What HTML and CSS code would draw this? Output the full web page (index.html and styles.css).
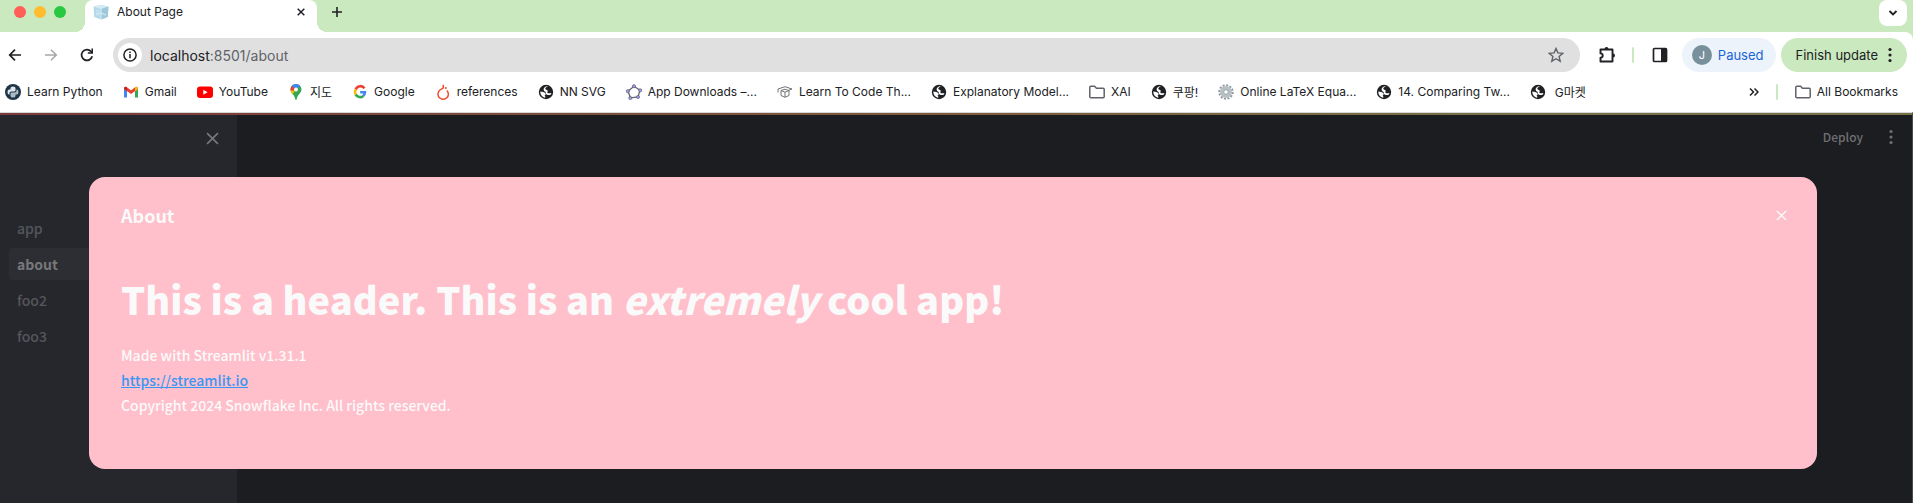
FILE: index.html
```html
<!DOCTYPE html>
<html lang="en">
<head>
<meta charset="utf-8">
<title>About Page</title>
<link rel="stylesheet" href="styles.css">
</head>
<body>
<svg class="defs" width="0" height="0" aria-hidden="true">
  <symbol id="globe" viewBox="0 0 16 16"><circle cx="8" cy="8" r="7.200" fill="#202124"/><path d="M9.500 2.700C7.300 3 6.800 4.500 7.800 5.500c.8.700 1.700.3 1.900 1.300.1 1-.6 1.200-.2 2 .5.700 2 .7 3.900.1l-.5 1.700c-1.500.8-3.900.7-4.800-.6-.6-1-.1-1.800-.5-2.100C6.500 7.300 5.600 6.700 5.600 5.500c0-1.900 1.600-3.200 3.900-3.300z" fill="#fff"/><path d="M2.300 7.500c2.200.3 4 .5 4.900 1.500.9 1.200.2 2.300-.7 2.700 1 .5 1 1.400.7 2-2.500-.3-5-2.500-4.900-6.200z" fill="#fff"/></symbol>
  <symbol id="folder" viewBox="0 0 16 16"><path d="M.8 3.300q0-1 1-1h3.800l1.800 1.900h6.800q1 0 1 1v7.500q0 1-1 1H1.800q-1 0-1-1z" fill="none" stroke="#5f6368" stroke-width="1.500"/></symbol>
  <symbol id="close" viewBox="0 0 12 12"><path d="M1 1l10 10M11 1L1 11" fill="none" stroke="currentColor" stroke-width="1.500"/></symbol>
  <symbol id="close-bold" viewBox="0 0 12 12"><path d="M1 1l10 10M11 1L1 11" fill="none" stroke="currentColor" stroke-width="2.200"/></symbol>
  <symbol id="dots" viewBox="0 0 4 16"><circle cx="2" cy="2.500" r="1.600" fill="currentColor"/><circle cx="2" cy="8" r="1.600" fill="currentColor"/><circle cx="2" cy="13.500" r="1.600" fill="currentColor"/></symbol>
</svg>

<header class="browser">
  <div class="tabstrip">
    <div class="lights"><i class="light red"></i><i class="light amber"></i><i class="light green"></i></div>
    <div class="tab">
      <svg width="16" height="16" viewBox="0 0 16 16" aria-hidden="true"><path d="M.5 2.500L8 1l7.500 1.500-.8 10.500L8 15.500 1.300 13z" fill="#b4d9e8"/><path d="M.5 2.500L8 1l7.500 1.500L8 5z" fill="#d3ebf4"/><path d="M8 5v10.500L14.700 13l.8-10.500z" fill="#9fc9db"/><path d="M3 5.500l3 1v5l-2.500-1z" fill="#c4e2ee"/><path d="M8 5v10M3 11l5-2 5 2" stroke="#d8eef6" fill="none"/></svg>
      <span class="tab-title">About Page</span>
      <button class="plain" aria-label="Close tab"><svg width="8" height="8"><use href="#close-bold"/></svg></button>
    </div>
    <button class="plain new-tab" aria-label="New tab"><svg width="12" height="12" viewBox="0 0 12 12"><path d="M6 1v10M1 6h10" stroke="#202124" stroke-width="1.600"/></svg></button>
    <button class="plain tab-search" aria-label="Search tabs"><svg width="10" height="8" viewBox="0 0 10 8"><path d="M1.500 2L5 5.500 8.500 2" fill="none" stroke="#202124" stroke-width="1.800"/></svg></button>
  </div>

  <div class="toolbar-wrap">
  <div class="toolbar">
    <div class="nav-buttons">
      <button class="plain" aria-label="Back"><svg width="14" height="14" viewBox="0 0 14 14"><path d="M13 7H2M7 1.700L1.700 7 7 12.300" fill="none" stroke="#202124" stroke-width="1.700"/></svg></button>
      <button class="plain" aria-label="Forward"><svg width="14" height="14" viewBox="0 0 14 14"><path d="M1 7h11M7 1.700L12.300 7 7 12.300" fill="none" stroke="#a5a6a8" stroke-width="1.500"/></svg></button>
      <button class="plain" aria-label="Reload"><svg width="14" height="14" viewBox="0 0 14 14"><path d="M12.200 8.300A5.400 5.400 0 1 1 11 3.400l1.300 1.300" fill="none" stroke="#202124" stroke-width="1.700"/><path d="M13 .5v5.300H7.800V4.300h3.700V.5z" fill="#202124"/></svg></button>
    </div>
    <div class="omnibox">
      <button class="plain site-info" aria-label="Site information"><svg width="14" height="14" viewBox="0 0 14 14"><circle cx="7" cy="7" r="6.100" fill="none" stroke="#202124" stroke-width="1.500"/><path d="M7 6v4.300M7 3.500v1.500" stroke="#202124" stroke-width="1.500"/></svg></button>
      <a class="url" href="#">localhost<span class="path">:8501/about</span></a>
      <button class="plain" aria-label="Bookmark this tab"><svg width="16" height="16" viewBox="0 0 16 16"><path d="M8 1.500l1.900 4.400 4.900.4-3.700 3.200 1.100 4.700L8 11.700l-4.200 2.500 1.100-4.700L1.200 6.300l4.900-.4z" fill="none" stroke="#5f6368" stroke-width="1.400"/></svg></button>
    </div>
    <button class="plain extensions" aria-label="Extensions"><svg width="18" height="18" viewBox="0 0 18 18"><path d="M2.500 3.500h12v12h-12v-3.700a2.200 2.200 0 0 0 0-4.400z" fill="none" stroke="#202124" stroke-width="1.900" stroke-linejoin="round"/><path d="M6.500 3a2 2 0 0 1 4 0zM15 7.500a2 2 0 0 1 0 4z" fill="#202124"/></svg></button>
    <i class="divider"></i>
    <button class="plain side-panel" aria-label="Side panel"><svg width="16" height="16" viewBox="0 0 16 16"><rect x="1.500" y="1.500" width="13" height="13" rx="1" fill="none" stroke="#202124" stroke-width="1.700"/><path d="M9 1.500h5.500v13H9z" fill="#202124"/></svg></button>
    <button class="pill profile"><span class="avatar">J</span>Paused</button>
    <button class="pill update">Finish update<svg width="4" height="16"><use href="#dots"/></svg></button>
  </div>

  <nav class="bookmarks" aria-label="Bookmarks">
    <a href="#"><svg viewBox="0 0 16 16"><circle cx="8" cy="8" r="8" fill="#1d3549"/><path d="M5.500 5.500V4q0-1.500 2.500-1.500T10.500 4v2.200q0 1.300-1.300 1.300H6.300Q4.500 7.500 4.500 9.300v1.200H4Q2.500 10.500 2.500 8T4 5.500h4" fill="#dfe5e8"/><path d="M10.500 10.500V12q0 1.500-2.500 1.500T5.500 12V9.800q0-1.300 1.300-1.300h2.900q1.800 0 1.800-1.800V5.500h.5q1.500 0 1.500 2.500T12 10.500H8" fill="#aebbc3"/></svg>Learn Python</a>
    <a href="#"><svg viewBox="0 0 16 16"><path d="M1 5v8.500h3V7z" fill="#4285f4"/><path d="M12 7v6.500h3V5z" fill="#34a853"/><path d="M1 5q0-2.800 2.500-2L8 6.300 12.500 3Q15 2.200 15 5L8 10z" fill="#ea4335"/><path d="M12 3.400L12.500 3Q15 2.200 15 5l-3 2.200z" fill="#fbbc04"/><path d="M1 5q0-2.800 2.500-2l.5.400v3.800z" fill="#c5221f"/></svg>Gmail</a>
    <a href="#"><svg viewBox="0 0 16 16"><rect y="2.500" width="16" height="11.500" rx="3" fill="#f00"/><path d="M6.300 5.700v5l4.300-2.500z" fill="#fff"/></svg>YouTube</a>
    <a href="#"><svg viewBox="0 0 16 16"><path d="M8 0a5.500 5.500 0 0 0-5.500 5.500C2.500 9 6.500 10.500 7.200 15q.8 2 1.600 0C9.500 10.500 13.500 9 13.500 5.500A5.500 5.500 0 0 0 8 0z" fill="#34a853"/><path d="M2.600 6.500Q3 8.500 4.500 10l6-7z" fill="#fbbc04"/><path d="M8 0a5.500 5.500 0 0 0-4.300 2L8 5.500 12.200 2A5.500 5.500 0 0 0 8 0z" fill="#4285f4"/><path d="M3.700 2a5.500 5.500 0 0 0-1.100 4.500L6 6.500 7 4.500z" fill="#ea4335"/><circle cx="8" cy="5.500" r="1.900" fill="#fff"/></svg>지도</a>
    <a href="#"><svg viewBox="0 0 16 16"><g fill="none" stroke-width="2.600"><path d="M12.500 4.300A5 5 0 0 0 3.700 5.500" stroke="#ea4335"/><path d="M3.700 5.500a5 5 0 0 0 0 5" stroke="#fbbc04"/><path d="M3.700 10.500a5 5 0 0 0 7.600 1.400" stroke="#34a853"/><path d="M11.300 11.900Q12.800 10.500 12.900 8.200H8.200" stroke="#4285f4"/></g></svg>Google</a>
    <a href="#"><svg viewBox="0 0 16 16"><path d="M8.300.8v3L4.400 6.500a5.200 5.200 0 1 0 7.500 0" fill="none" stroke="#ee4c2c" stroke-width="1.500"/><circle cx="10.800" cy="4" r="1" fill="#ee4c2c"/></svg>references</a>
    <a href="#"><svg><use href="#globe"/></svg>NN SVG</a>
    <a href="#"><svg viewBox="0 0 16 16"><path d="M8 2.300l6 4-2 6.700-7.500.8L2 7.200z" fill="none" stroke="#666" stroke-width="1.300"/><g fill="#9999ff" stroke="#555" stroke-width=".6"><circle cx="8" cy="2.200" r="1.600"/><circle cx="14.200" cy="6.300" r="1.600"/><circle cx="12" cy="13" r="1.600"/><circle cx="4.300" cy="14" r="1.600"/><circle cx="1.900" cy="7.200" r="1.600"/></g></svg>App Downloads –...</a>
    <a href="#"><svg viewBox="0 0 16 16"><path d="M1 8.500V5l7-2.300L15 5l-3 1.200M4 6.500L8 5.200l4 1.300v5L8 13.300l-4-1.800zM4 6.500L8 8.200l4-1.700M8 8.200v5" fill="none" stroke="#707376"/></svg>Learn To Code Th...</a>
    <a href="#"><svg><use href="#globe"/></svg>Explanatory Model...</a>
    <a href="#"><svg><use href="#folder"/></svg>XAI</a>
    <a href="#"><svg><use href="#globe"/></svg>쿠팡!</a>
    <a href="#"><svg viewBox="0 0 16 16"><circle cx="8" cy="8" r="6.700" fill="none" stroke="#8c989e" stroke-width="2" stroke-dasharray="2 1.500"/><circle cx="8" cy="8" r="4.300" fill="none" stroke="#b7c1c5" stroke-width="3.600"/><circle cx="8" cy="8" r="2.300" fill="#fff" stroke="#7d898f" stroke-width=".8"/></svg>Online LaTeX Equa...</a>
    <a href="#"><svg><use href="#globe"/></svg>14. Comparing Tw...</a>
    <a href="#" class="spaced"><svg><use href="#globe"/></svg>G마켓</a>
    <div class="bookmarks-end">
      <button class="plain" aria-label="More bookmarks"><svg width="10" height="10" viewBox="0 0 10 10"><path d="M1 1.500L4.500 5 1 8.500M5.500 1.500L9 5 5.500 8.500" fill="none" stroke="#202124" stroke-width="1.500"/></svg></button>
      <i class="divider"></i>
      <a href="#"><svg><use href="#folder"/></svg>All Bookmarks</a>
    </div>
  </nav>
  </div>
</header>

<div class="app">
  <aside class="sidebar">
    <button class="plain sidebar-close" aria-label="Close sidebar"><svg width="13" height="13"><use href="#close"/></svg></button>
    <nav class="pages" aria-label="Pages">
      <a href="#">app</a>
      <a href="#" class="current" aria-current="page">about</a>
      <a href="#">foo2</a>
      <a href="#">foo3</a>
    </nav>
  </aside>
  <main class="main">
    <div class="app-bar">
      <button class="plain deploy">Deploy</button>
      <button class="plain" aria-label="Main menu"><svg width="4" height="16"><use href="#dots"/></svg></button>
    </div>
  </main>

  <div class="overlay">
    <section class="modal" role="dialog" aria-labelledby="modal-title">
      <div class="modal-head">
        <h2 id="modal-title">About</h2>
        <button class="plain" aria-label="Close"><svg width="11" height="11"><use href="#close"/></svg></button>
      </div>
      <h1>This is a header. This is an <em>extremely</em> cool app!</h1>
      <p>Made with Streamlit v1.31.1<br><a href="https://streamlit.io">https://streamlit.io</a><br>Copyright 2024 Snowflake Inc. All rights reserved.</p>
    </section>
  </div>
</div>
</body>
</html>
```
FILE: styles.css
```css
* { box-sizing: border-box; }

body {
  margin: 0;
  min-height: 100vh;
  display: flex;
  flex-direction: column;
  font-family: Inter, "Noto Sans CJK KR", sans-serif;
  font-size: 12px;
  color: #202124;
}

.defs { position: absolute; }
svg { display: block; flex: none; }
a { color: inherit; text-decoration: none; }

.plain {
  display: flex;
  align-items: center;
  justify-content: center;
  padding: 0;
  border: 0;
  background: none;
  color: inherit;
  font: inherit;
}

/* Browser frame */
.browser { background: #cbe9bf; }

.tabstrip {
  display: flex;
  height: 32px;
  padding: 0 6px 0 14px;
}

.lights { display: flex; gap: 8px; width: 71px; padding-top: 6px; }
.light { width: 12px; height: 12px; border-radius: 50%; }
.red { background: #ff5f57; }
.amber { background: #febc2e; }
.green { background: #28c840; }

.tab {
  position: relative;
  display: flex;
  align-items: center;
  width: 232px;
  padding: 0 12px 9px 8px;
  background: #fff;
  border-radius: 8px 8px 0 0;
}
.tab::before, .tab::after {
  content: "";
  position: absolute;
  bottom: 0;
  width: 10px;
  height: 10px;
}
.tab::before { right: 100%; background: radial-gradient(circle at 0 0, transparent 10px, #fff 10px); }
.tab::after { left: 100%; background: radial-gradient(circle at 100% 0, transparent 10px, #fff 10px); }
.tab-title { flex: 1; padding-left: 8px; }

.new-tab { width: 40px; height: 24px; }
.tab-search {
  width: 28px;
  height: 26px;
  margin-left: auto;
  background: #fff;
  border-radius: 8px;
}

.toolbar-wrap { background: #fff; border-top-right-radius: 8px; }

.toolbar {
  display: flex;
  align-items: center;
  padding: 6px 6px 0 8px;
}
.nav-buttons { display: flex; gap: 22px; width: 105px; }

.omnibox {
  flex: 1;
  display: flex;
  align-items: center;
  height: 34px;
  padding: 0 16px 0 5px;
  background: #e0e0e0;
  border-radius: 17px;
}
.site-info { width: 24px; height: 24px; background: #fff; border-radius: 50%; }
.url { flex: 1; padding-left: 8px; font-size: 14px; }
.path { color: #5f6368; }

.extensions { margin-left: 18px; }
.divider { width: 2px; height: 16px; background: #cbe9bf; border-radius: 1px; }
.extensions + .divider { margin: 0 18px 0 16px; }
.side-panel { margin-right: 14px; }

.pill {
  display: flex;
  align-items: center;
  height: 34px;
  border: 0;
  border-radius: 17px;
  color: inherit;
  font: inherit;
  font-size: 13px;
  white-space: nowrap;
}
.profile {
  gap: 6px;
  margin-right: 5px;
  padding: 0 12px 0 10px;
  background: #edf3fb;
  color: #1a63d8;
}
.avatar {
  width: 20px;
  height: 20px;
  border-radius: 50%;
  background: #78909c;
  color: #fff;
  font-size: 11px;
  line-height: 20px;
}
.update { gap: 10px; padding: 0 15px; background: #cbe9bf; }

.bookmarks {
  display: flex;
  align-items: center;
  gap: 20px;
  height: 40px;
  padding: 0 15px 1px 5px;
  white-space: nowrap;
}
.bookmarks a { display: flex; align-items: center; gap: 6px; }
.bookmarks a svg { width: 16px; height: 16px; }
.bookmarks a.spaced { gap: 9px; }
.bookmarks-end { display: flex; align-items: center; gap: 17px; margin-left: auto; }

/* Streamlit app */
.app {
  position: relative;
  flex: 1;
  display: flex;
  border-top: 1px solid #d5d8d5;
  border-right: 1px solid #4b4b4d;
  background: #1c1d21;
  font-family: "Noto Sans CJK KR", sans-serif;
  font-size: 14px;
}
.app::before {
  content: "";
  position: absolute;
  inset: 0 0 auto 0;
  height: 2px;
  background: linear-gradient(90deg, #7c3a3c, #7d5a3c 50%, #767248 80%);
}

.sidebar { width: 237px; background: #26272c; color: #55565a; }
.sidebar-close { margin: 19px 18px 0 auto; color: #77787b; }
.pages { display: flex; flex-direction: column; gap: 4px; padding: 67px 9px 0; }
.pages a { padding: 0 8px; border-radius: 4px; font-weight: 500; line-height: 32px; }
.pages .current { background: #2d2e33; color: #77787b; font-weight: 700; }

.main { flex: 1; color: #6f7073; }
.app-bar {
  display: flex;
  align-items: center;
  justify-content: flex-end;
  gap: 26px;
  padding: 14px 19px 0 0;
}
.deploy { font-size: 12px; font-weight: 500; line-height: 20px; }

.overlay { position: absolute; inset: 0; padding: 64px 95px 0 89px; }
.modal {
  padding: 22px 30px 51px 32px;
  border-radius: 16px;
  background: #ffc0cb;
  color: #fafafa;
}
.modal-head { display: flex; align-items: center; justify-content: space-between; height: 32px; }
h1, h2, p { margin: 0; }
h2 { font-size: 18px; line-height: 32px; }
h1 { padding: 44px 0 20px; font-size: 38px; font-weight: 900; line-height: 48px; }
p { font-weight: 500; line-height: 25px; }
p a { color: #3897f5; text-decoration: underline; }
```
